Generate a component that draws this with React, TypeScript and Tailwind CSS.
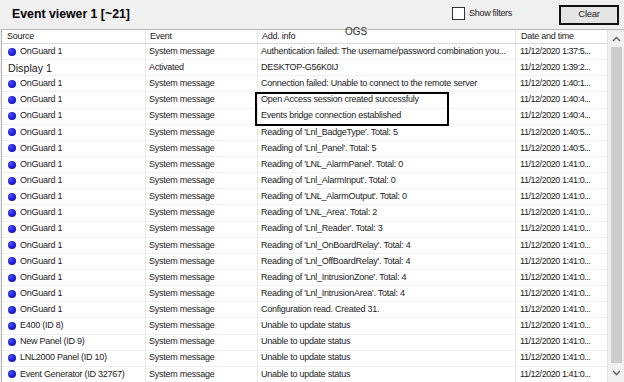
import React from "react";

type Row = { src: string; dot: boolean; ev: string; info: string; date: string; big?: boolean };

const R = (src: string, info: string, date: string, ev = "System message", dot = true): Row => ({ src, dot, ev, info, date });

const rows: Row[] = [
  R("OnGuard 1", "Authentication failed: The username/password combination you...", "11/12/2020 1:37:5..."),
  { src: "Display 1", dot: false, ev: "Activated", info: "DESKTOP-G56K0IJ", date: "11/12/2020 1:39:2...", big: true },
  R("OnGuard 1", "Connection failed: Unable to connect to the remote server", "11/12/2020 1:40:1..."),
  R("OnGuard 1", "Open Access session created successfuly", "11/12/2020 1:40:4..."),
  R("OnGuard 1", "Events bridge connection established", "11/12/2020 1:40:4..."),
  R("OnGuard 1", "Reading of 'Lnl_BadgeType'. Total: 5", "11/12/2020 1:40:5..."),
  R("OnGuard 1", "Reading of 'Lnl_Panel'. Total: 5", "11/12/2020 1:40:5..."),
  R("OnGuard 1", "Reading of 'LNL_AlarmPanel'. Total: 0", "11/12/2020 1:41:0..."),
  R("OnGuard 1", "Reading of 'Lnl_AlarmInput'. Total: 0", "11/12/2020 1:41:0..."),
  R("OnGuard 1", "Reading of 'LNL_AlarmOutput'. Total: 0", "11/12/2020 1:41:0..."),
  R("OnGuard 1", "Reading of 'LNL_Area'. Total: 2", "11/12/2020 1:41:0..."),
  R("OnGuard 1", "Reading of 'Lnl_Reader'. Total: 3", "11/12/2020 1:41:0..."),
  R("OnGuard 1", "Reading of 'Lnl_OnBoardRelay'. Total: 4", "11/12/2020 1:41:0..."),
  R("OnGuard 1", "Reading of 'Lnl_OffBoardRelay'. Total: 4", "11/12/2020 1:41:0..."),
  R("OnGuard 1", "Reading of 'Lnl_IntrusionZone'. Total: 4", "11/12/2020 1:41:0..."),
  R("OnGuard 1", "Reading of 'Lnl_IntrusionArea'. Total: 4", "11/12/2020 1:41:0..."),
  R("OnGuard 1", "Configuration read. Created 31.", "11/12/2020 1:41:0..."),
  R("E400 (ID 8)", "Unable to update status", "11/12/2020 1:41:0..."),
  R("New Panel (ID 9)", "Unable to update status", "11/12/2020 1:41:0..."),
  R("LNL2000 Panel (ID 10)", "Unable to update status", "11/12/2020 1:41:0..."),
  R("Event Generator (ID 32767)", "Unable to update status", "11/12/2020 1:41:0..."),
];

const font = { fontFamily: "'Liberation Sans', Arial, sans-serif" };

export default function App() {
  return (
    <div
      className="relative w-[624px] h-[382px] overflow-hidden bg-[#f0f0f0] text-[9px] tracking-[-0.25px] text-[#1a1a1a]"
      style={font}
    >
      {/* top bar */}
      <div className="flex h-[29px] items-center pl-[12px] pr-[5px]">
        <div className="text-[12.3px] font-bold tracking-normal text-black">Event viewer 1 [~21]</div>
        <div className="flex-1" />
        <div className="flex items-center gap-[4px] pb-[2px]">
          <div className="h-[13px] w-[13px] border border-[#333] bg-white" />
          <span className="text-[9px] tracking-[-0.3px]">Show filters</span>
        </div>
        <div className="ml-[47px] flex h-[20px] w-[60px] items-center justify-center border-2 border-[#111] bg-[#e5e5e5] text-[9.5px]">
          Clear
        </div>
      </div>

      {/* table */}
      <div className="ml-[1px] flex h-[353px] border-l border-t border-[#b4b4b4] bg-white">
        <div className="flex w-[606px] flex-col">
          <div className="flex h-[14px] border-b border-[#d8d8d8]">
            <div className="flex w-[144px] items-center border-r border-[#e3e3e3] pl-[5px]">Source</div>
            <div className="flex w-[112px] items-center border-r border-[#e3e3e3] pl-[4px]">Event</div>
            <div className="flex w-[258px] items-center border-r border-[#e3e3e3] pl-[4px]">Add. info</div>
            <div className="flex flex-1 items-center pl-[5px]">Date and time</div>
          </div>
          {rows.map((r, i) => (
            <div key={i} className="flex h-[16.15px] shrink-0 border-b border-[#f0f0f0]">
              <div className="flex w-[144px] items-center overflow-hidden whitespace-nowrap border-r border-[#e8e8e8] pl-[6px]">
                {r.dot ? (
                  <>
                    <span className="mr-[4px] inline-block h-[8px] w-[8px] rounded-full bg-[radial-gradient(circle_at_35%_35%,#4a4aff,#1010c0_70%)]" />
                    <span>{r.src}</span>
                  </>
                ) : (
                  <span className="text-[10.7px] tracking-normal">{r.src}</span>
                )}
              </div>
              <div className="flex w-[112px] items-center overflow-hidden whitespace-nowrap border-r border-[#e8e8e8] pl-[3px]">
                {r.ev}
              </div>
              <div className="flex w-[258px] items-center overflow-hidden whitespace-nowrap border-r border-[#e8e8e8] pl-[3px]">
                {r.info}
              </div>
              <div className="flex flex-1 items-center overflow-hidden whitespace-nowrap pl-[4px] tracking-[-0.45px]">{r.date}</div>
            </div>
          ))}
        </div>
        {/* scrollbar */}
        <div className="flex w-[17px] flex-col items-center border-l border-[#e3e3e3] bg-[#f0f0f0]">
          <div className="flex h-[17px] w-full items-center justify-center">
            <svg width="9" height="6" viewBox="0 0 9 6">
              <path d="M1 5 L4.5 1.5 L8 5" fill="none" stroke="#606060" strokeWidth="1.4" />
            </svg>
          </div>
          <div className="h-[316px] w-[11px] bg-[#cdcdcd]" />
          <div className="flex flex-1 w-full items-center justify-center">
            <svg width="9" height="6" viewBox="0 0 9 6">
              <path d="M1 1 L4.5 4.5 L8 1" fill="none" stroke="#606060" strokeWidth="1.4" />
            </svg>
          </div>
        </div>
      </div>

      {/* overlays */}
      <div className="absolute left-[345px] top-[24px] text-[10px] tracking-normal text-[#333]">OGS</div>
      <div className="absolute left-[255px] top-[92px] h-[34px] w-[194px] border-2 border-black" />
    </div>
  );
}
